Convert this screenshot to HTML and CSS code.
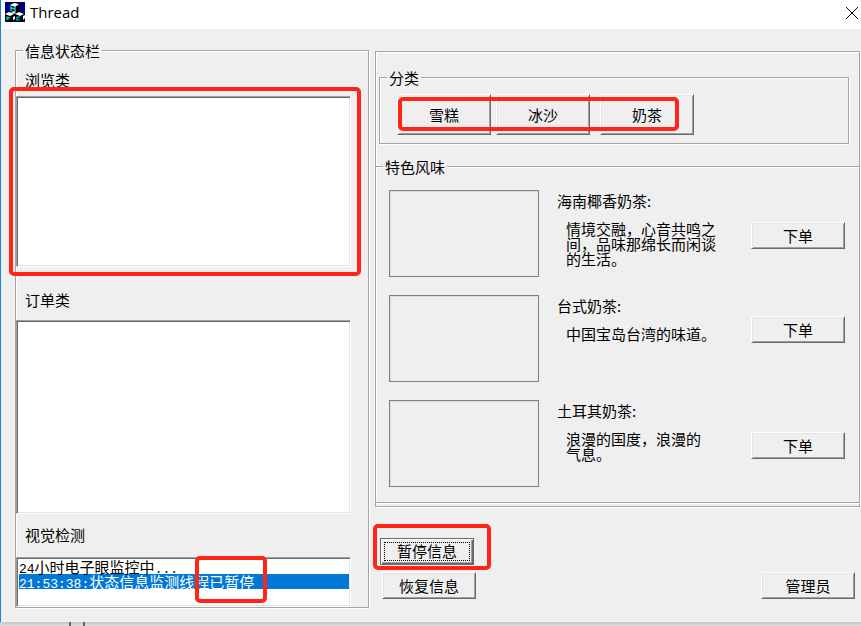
FILE: index.html
```html
<!DOCTYPE html>
<html lang="zh-CN">
<head>
<meta charset="utf-8">
<title>Thread</title>
<link rel="stylesheet" href="styles.css">
</head>
<body>
<div class="window">
  <header class="titlebar">
    <svg class="app-icon" viewBox="0 0 20 20" aria-hidden="true">
      <rect width="20" height="20" fill="#000084"/>
      <path d="M5 3l4-3 6 2v8l5 2v6l-3 2h-5l-2-2-3 2H3l-3-2v-6l5-3z" fill="#000"/>
      <path d="M5 3l4-2 5 1-4 3z" fill="#fff"/>
      <path d="M6 9V5l2 2 2-1v4" stroke="#00d8d8" stroke-width="1.4" fill="none"/>
      <path d="M0 12l4-2 5 2-4 2z" fill="#fff"/>
      <path d="M2 18v-3l3 1M2 17h2" stroke="#00d8d8" stroke-width="1.2" fill="none"/>
      <path d="M6 10l3-1 2 2-3 1z" fill="#d8e4e4"/>
      <path d="M10 12l4-2 5 2-4 2z" fill="#fff"/>
      <path d="M15 15l-3 0v3l3 0" stroke="#00d8d8" stroke-width="1.2" fill="none"/>
      <path d="M18 14l2-1v3l-2 2z" fill="#fff"/>
      <path d="M8 15l2-1v3l-2 1z" fill="#fff"/>
    </svg>
    <h1 class="title">Thread</h1>
    <button class="close" aria-label="关闭"><svg viewBox="0 0 12 12" aria-hidden="true"><path d="M0 0l12 12M12 0L0 12" stroke="#000" fill="none"/></svg></button>
  </header>

  <main class="client">
    <fieldset class="group status">
      <legend>信息状态栏</legend>
      <h2 class="caption caption-first">浏览类</h2>
      <div class="list list-browse"><span class="mark mark-list"></span></div>
      <h2 class="caption caption-order">订单类</h2>
      <div class="list list-order"></div>
      <h2 class="caption caption-watch">视觉检测</h2>
      <ul class="list list-watch">
        <li><span class="code">24</span>小时电子眼监控中<span class="code">...</span></li>
        <li class="selected"><span class="code">21:53:38:</span>状态信息监测线程已暂停</li>
        <li class="mark mark-log" aria-hidden="true"></li>
      </ul>
    </fieldset>

    <div class="side">
      <section class="shop">
        <fieldset class="group categories">
          <legend>分类</legend>
          <div class="category-row">
            <button class="btn btn-tall">雪糕</button>
            <button class="btn btn-tall">冰沙</button>
            <button class="btn btn-tall btn-apart">奶茶</button>
            <span class="mark mark-categories"></span>
          </div>
        </fieldset>
        <fieldset class="group flavours">
          <legend>特色风味</legend>
          <div class="products">
            <article class="product">
              <div class="picture"></div>
              <div class="info">
                <h3>海南椰香奶茶:</h3>
                <p>情境交融，心音共鸣之<br>间，品味那绵长而闲谈<br>的生活。</p>
              </div>
              <button class="btn">下单</button>
            </article>
            <article class="product product-short">
              <div class="picture"></div>
              <div class="info">
                <h3>台式奶茶:</h3>
                <p>中国宝岛台湾的味道。</p>
              </div>
              <button class="btn">下单</button>
            </article>
            <article class="product">
              <div class="picture"></div>
              <div class="info">
                <h3>土耳其奶茶:</h3>
                <p>浪漫的国度，浪漫的<br>气息。</p>
              </div>
              <button class="btn">下单</button>
            </article>
          </div>
        </fieldset>
      </section>
      <footer class="actions">
        <div class="thread-actions">
          <div class="marked">
            <button class="btn btn-default"><span class="focus">暂停信息</span></button>
            <span class="mark mark-pause"></span>
          </div>
          <button class="btn">恢复信息</button>
        </div>
        <button class="btn">管理员</button>
      </footer>
    </div>
  </main>
</div>
<div class="desktop"><i></i><i></i></div>
</body>
</html>
```
FILE: styles.css
```css
* {
  box-sizing: border-box;
  margin: 0;
  padding: 0;
}

body {
  display: flex;
  flex-direction: column;
  min-height: 100vh;
  background: #efefef;
  color: #000;
  font: 15px/16px "Noto Sans CJK SC", sans-serif;
}

h2, h3 {
  font-size: 15px;
  font-weight: 400;
}

.window {
  flex: 1;
  display: flex;
  flex-direction: column;
  border-left: 1px solid #1883d7;
}

.titlebar {
  display: flex;
  align-items: flex-start;
  gap: 5px;
  height: 29px;
  padding: 2px 3px 0 4px;
  background: #fff;
}

.app-icon {
  width: 20px;
  height: 20px;
}

.title {
  flex: 1;
  font: 400 15px/20px "Open Sans", sans-serif;
}

.close {
  width: 12px;
  height: 22px;
  border: 0;
  background: none;
}

.close svg {
  display: block;
  width: 12px;
  height: 12px;
  overflow: visible;
}

.client {
  flex: 1;
  display: grid;
  grid-template-columns: 354fr 485fr;
  gap: 6px;
  padding: 14px 1px 0 14px;
}

.group {
  min-width: 0;
  border: 1px solid #a5a5a5;
  box-shadow: 1px 1px #fff, inset 1px 1px #fff;
}

.group legend {
  margin-left: 7px;
  padding: 0 2px;
  background: #efefef;
  line-height: 15px;
}

.status {
  display: flex;
  flex-direction: column;
  margin-bottom: 14px;
  padding-right: 17px;
}

.caption {
  padding-left: 9px;
}

.caption-first {
  padding-top: 14px;
  padding-bottom: 8px;
}

.caption-order {
  padding-top: 25px;
  padding-bottom: 12px;
}

.caption-watch {
  padding-top: 13px;
  padding-bottom: 14px;
}

.list {
  position: relative;
  border: 1px solid;
  border-color: #a0a0a0 #fff #fff #a0a0a0;
  box-shadow: inset 1px 1px #696969, inset -1px -1px #e3e3e3;
  background: #fff;
  list-style: none;
}

.list-browse {
  flex: 171 0 171px;
}

.list-order {
  flex: 194 0 194px;
}

.list-watch {
  flex: 50 0 50px;
  padding: 1px 1px 0 2px;
  line-height: 15px;
  white-space: nowrap;
}

.list-watch li:not(.mark) {
  height: 15px;
}

.code {
  font-family: "Liberation Mono", monospace;
  font-size: 13px;
  line-height: 1px;
}

.selected {
  background: #0078d7;
  color: #fff;
}

.mark {
  position: absolute;
  border: 4px solid #ff2414;
  border-radius: 5px;
  pointer-events: none;
}

.mark-list {
  inset: -10px -11px;
  left: -8px;
}

.mark-log {
  top: -2px;
  left: 178px;
  width: 72px;
  height: 47px;
}

.side {
  display: flex;
  flex-direction: column;
  padding-top: 8px;
}

.shop {
  border: 1px solid #a5a5a5;
  box-shadow: 1px 1px #fff, inset 1px 1px #fff;
}

.categories {
  margin: 18px 10px 0 3px;
}

.category-row {
  position: relative;
  display: flex;
  gap: 5px;
  margin: 9px 0 8px 17px;
}

.btn {
  width: 94px;
  height: 27px;
  border: 1px solid;
  border-color: #fff #696969 #696969 #fff;
  box-shadow: inset 1px 1px #e3e3e3, inset -1px -1px #a0a0a0;
  background: #efefef;
  color: #000;
  font: inherit;
}

.btn-tall {
  height: 41px;
}

.btn-apart {
  margin-left: 5px;
}

.mark-categories {
  top: 3px;
  left: 1px;
  width: 281px;
  height: 34px;
}

.flavours {
  margin: 15px -1px 3px;
}

.products {
  display: flex;
  flex-direction: column;
  gap: 18px;
  padding: 16px 14px 15px 13px;
}

.product {
  display: flex;
  align-items: flex-start;
}

.picture {
  width: 150px;
  height: 87px;
  border: 1px solid #808080;
  box-shadow: inset 1px 1px #dcdcdc;
}

.info {
  flex: 1;
  padding: 3px 0 0 18px;
}

.info p {
  padding: 12px 0 0 9px;
  line-height: 15px;
}

.product .btn {
  margin-top: 32px;
}

.product-short .btn {
  margin-top: 21px;
}

.actions {
  display: flex;
  justify-content: space-between;
  align-items: flex-end;
  padding: 31px 5px 0 5px;
}

.thread-actions {
  display: flex;
  flex-direction: column;
  align-items: flex-end;
  gap: 7px;
}

.marked {
  position: relative;
  align-self: flex-start;
  padding-right: 2px;
}

.btn-default {
  display: block;
  padding: 2px 3px;
  border-color: #696969;
  box-shadow: inset 1px 1px #fff, inset -1px -1px #696969, inset -2px -2px #a0a0a0;
}

.focus {
  display: block;
  height: 19px;
  border: 1px dotted #000;
}

.mark-pause {
  top: -14px;
  left: -7px;
  width: 118px;
  height: 46px;
}

.desktop {
  display: flex;
  gap: 12px;
  height: 4px;
  padding-left: 69px;
  background: linear-gradient(#c4c4c4, #e2e2e2);
}

.desktop i {
  width: 2px;
  background: #666;
}
```
